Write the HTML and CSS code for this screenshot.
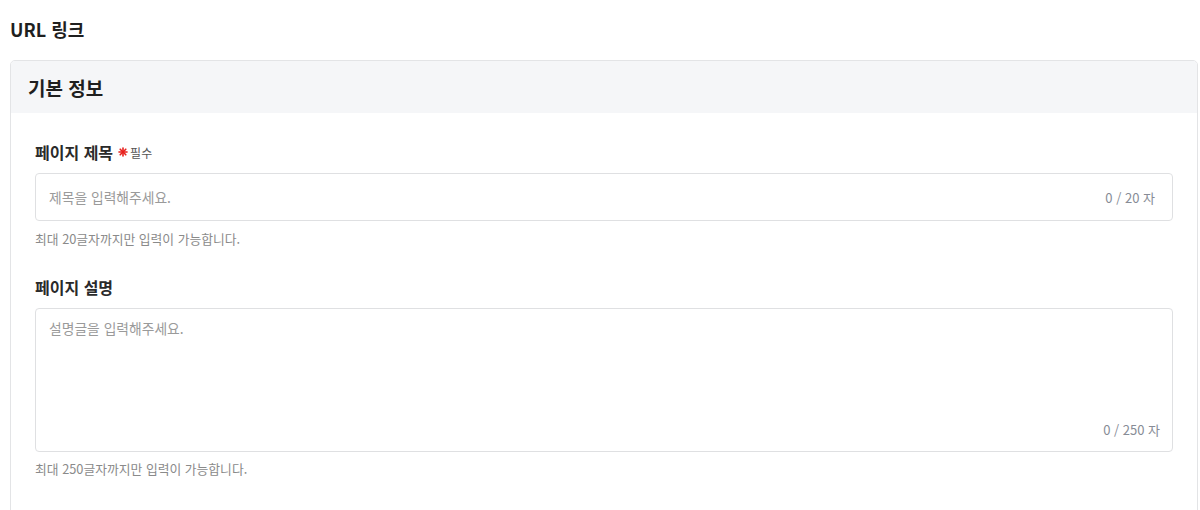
FILE: index.html
```html
<!DOCTYPE html>
<html lang="ko">
<head>
<meta charset="utf-8">
<link rel="stylesheet" href="styles.css">
</head>
<body>
<h1 class="page-title">URL 링크</h1>
<section class="card">
  <header class="card-head">기본 정보</header>
  <div class="card-body">
    <div class="field">
      <label class="label">페이지 제목
        <span class="req">
          <svg class="star" viewBox="0 0 10 10" width="10" height="10"><g stroke="#e8211d" stroke-width="1.6" stroke-linecap="round"><line x1="5" y1="1" x2="5" y2="9"/><line x1="1" y1="5" x2="9" y2="5"/><line x1="2.2" y1="2.2" x2="7.8" y2="7.8"/><line x1="7.8" y1="2.2" x2="2.2" y2="7.8"/></g></svg>
          필수
        </span>
      </label>
      <div class="input-box">
        <span class="placeholder">제목을 입력해주세요.</span>
        <span class="count">0 / 20 자</span>
      </div>
      <p class="help">최대 20글자까지만 입력이 가능합니다.</p>
    </div>
    <div class="field">
      <label class="label">페이지 설명</label>
      <div class="textarea-box">
        <span class="placeholder">설명글을 입력해주세요.</span>
        <span class="count count-bottom">0 / 250 자</span>
      </div>
      <p class="help help-tight">최대 250글자까지만 입력이 가능합니다.</p>
    </div>
  </div>
</section>
</body>
</html>
```
FILE: styles.css
```css
* { box-sizing: border-box; }
html, body { margin: 0; background: #fff; }
body {
  padding: 0 2px 0 10px;
  font-family: "Noto Sans CJK KR", "Noto Sans", sans-serif;
  color: #222;
}
.page-title {
  margin: 0;
  height: 60px;
  display: flex;
  align-items: center;
  font-size: 18px;
  font-weight: 700;
  color: #1f1f1f;
  padding-bottom: 2px;
}
.card {
  border: 1px solid #e3e4e6;
  border-radius: 5px;
  overflow: hidden;
  height: 470px;
}
.card-head {
  background: #f5f6f8;
  height: 52px;
  display: flex;
  align-items: center;
  padding-left: 17px;
  font-size: 19px;
  font-weight: 700;
  color: #1f1f1f;
}
.card-body {
  padding: 28px 24px 0 24px;
}
.field + .field { margin-top: 28px; }
.label {
  display: flex;
  align-items: center;
  height: 22px;
  font-size: 16px;
  font-weight: 700;
  color: #2a2a2a;
  margin-bottom: 10px;
}
.req {
  display: inline-flex;
  align-items: center;
  margin-left: 5px;
  font-size: 12px;
  font-weight: 400;
  color: #555;
  gap: 2px;
}
.star { display: block; }
.input-box {
  height: 48px;
  border: 1px solid #dfe0e2;
  border-radius: 4px;
  display: flex;
  align-items: center;
  justify-content: space-between;
  padding: 0 17px 0 13px;
  font-size: 13.8px;
}
.placeholder { color: #9a9a9a; }
.count { color: #878c96; font-size: 13px; }
.textarea-box {
  position: relative;
  height: 144px;
  border: 1px solid #dfe0e2;
  border-radius: 4px;
  padding: 9px 13px;
  font-size: 13.8px;
  line-height: 20px;
}
.count-bottom {
  position: absolute;
  right: 12px;
  bottom: 11px;
  line-height: 20px;
}
.help {
  margin: 9px 0 0;
  font-size: 12.8px;
  line-height: 18px;
  color: #8a8a8a;
}
.help-tight { margin-top: 8px; }
```
